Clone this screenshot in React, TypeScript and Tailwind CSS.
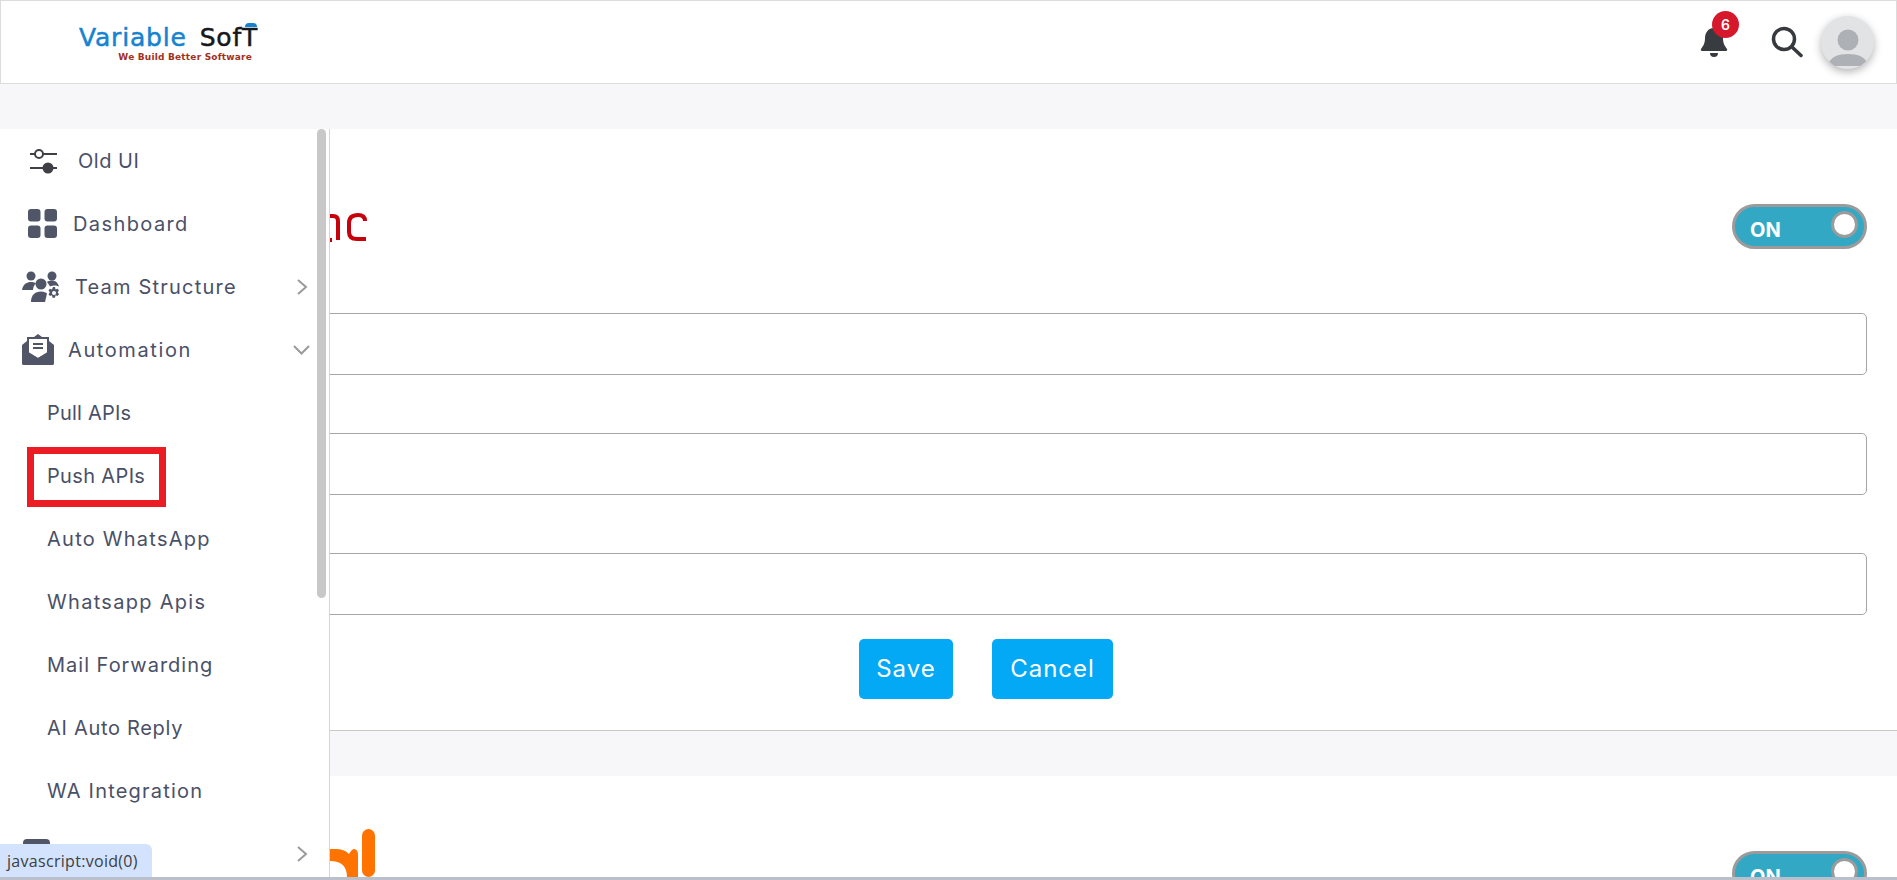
const textColor = "text-[#4a5068]";

function OldUiIcon() {
  return (
    <svg width="28" height="28" viewBox="0 0 28 28" className="text-[#3f3f46]">
      <g stroke="currentColor" strokeWidth="2" fill="none">
        <path d="M0 7h5M13 7h14" />
        <circle cx="9" cy="7" r="4" />
        <path d="M0 21h14M22 21h5" />
      </g>
      <circle cx="18" cy="21" r="5.5" fill="currentColor" />
    </svg>
  );
}

function DashIcon() {
  return (
    <svg width="29" height="29" viewBox="0 0 29 29" fill="#505568">
      <rect x="0" y="0" width="12.500" height="12.500" rx="3" />
      <rect x="16.500" y="0" width="12.500" height="12.500" rx="3" />
      <rect x="0" y="16.500" width="12.500" height="12.500" rx="3" />
      <rect x="16.500" y="16.500" width="12.500" height="12.500" rx="3" />
    </svg>
  );
}

function TeamIcon() {
  return (
    <svg width="40" height="32" viewBox="0 0 40 32" fill="#505568">
      <circle cx="9" cy="5" r="4.5" />
      <circle cx="30" cy="5" r="4.5" />
      <path d="M0 19c1-6 5-8 9-8 2 0 4 .5 5 1.5-2 1.500-3 4-3 6.500z" />
      <circle cx="19" cy="13" r="5.500" />
      <path d="M9 31c0-7 4-10.500 10-10.500 3 0 5 1 6 2l-2 8.500z" />
      <path d="M25 11c1-1 3-1.500 5-1.500 3 0 6 2 7 6l-3-1c-2 0-5 0-6 1-1-2-2-3.500-3-4.500z" />
      <path d="M31 16l2 0 .5 2.500 2-.8 1.500 1.500-1.300 2 1.300 2-1.500 1.800-2-.8-.5 2.500h-2.500l-.5-2.500-2 .8-1.500-1.800 1.300-2-1.300-2 1.500-1.500 2 .8z" />
      <circle cx="32" cy="22" r="2" fill="#fff" />
    </svg>
  );
}

function MailIcon() {
  return (
    <svg width="32" height="32" viewBox="0 0 32 32">
      <path d="M0 11L5 7V3h7l4-3 4 3h7v4l5 4v18a2 2 0 0 1-2 2H2a2 2 0 0 1-2-2z" fill="#505568" />
      <path d="M7 5h18v14l-9 5-9-5z" fill="#fff" />
      <path d="M11 10h10M11 14h10" stroke="#505568" strokeWidth="2" />
      <path d="M0 14l16 10 16-10v15a2 2 0 0 1-2 2H2a2 2 0 0 1-2-2z" fill="#505568" />
    </svg>
  );
}

function ChevRight() {
  return (
    <svg width="11" height="16" viewBox="0 0 11 16" fill="none" stroke="#9a9a9a" strokeWidth="2">
      <path d="M1 1l8 7-8 7" />
    </svg>
  );
}

function ChevDown() {
  return (
    <svg width="17" height="10" viewBox="0 0 17 10" fill="none" stroke="#9a9a9a" strokeWidth="2" className="mr-[-2px]">
      <path d="M1 1l7.500 7.500L16 1" />
    </svg>
  );
}

function Toggle() {
  return (
    <div className="flex h-[45px] w-[135px] items-center justify-between rounded-[23px] border-[3px] border-[#9b9b9b] bg-[#33a8c4] pl-[15px] pr-[6px]">
      <span className="mt-[6px] text-[20px] font-bold text-white">ON</span>
      <span className="mt-[-4px] h-[27px] w-[27px] rounded-full border-[3px] border-[#9b9b9b] bg-white" />
    </div>
  );
}

function Field() {
  return <div className="h-[62px] rounded-[5px] border border-[#a6a6a6] bg-white" />;
}

function MenuRow({ icon, label, chevron, pad, gap, track }: { icon: React.ReactNode; label: string; chevron?: "right" | "down"; pad: string; gap: string; track?: string }) {
  return (
    <div className={`flex h-[63px] items-center pr-[7px] ${pad}`}>
      <div className={`flex flex-1 items-center ${gap}`}>
        {icon}
        <span className={`text-[20px] ${track} ${textColor}`}>{label}</span>
      </div>
      {chevron === "right" && <ChevRight />}
      {chevron === "down" && <ChevDown />}
    </div>
  );
}

function SubRow({ label, track, boxed }: { label: string; track: string; boxed?: boolean }) {
  return (
    <div className="flex h-[63px] items-center pl-[47px]">
      <span className={`relative text-[20px] ${track} ${textColor}`}>
        {label}
        {boxed && <span className="absolute -bottom-[16px] -left-[20px] -right-[21px] -top-[14px] border-[7px] border-[#ec1c24]" />}
      </span>
    </div>
  );
}

export default function App() {
  return (
    <div className="relative h-[880px] overflow-hidden bg-[#f7f7f9] font-['Inter','Liberation_Sans',sans-serif]">
      {/* header */}
      <header className="flex h-[84px] items-center justify-between border border-[#dcdcdc] bg-white pr-[22px]">
        <div className="ml-[78px] mt-[2px] flex flex-col items-end">
          <div className="relative flex items-baseline gap-[13px] font-['DejaVu_Sans',sans-serif] text-[25px] leading-[27px] tracking-[0.8px] [-webkit-text-stroke:0.5px]">
            <span className="text-[#1583d0]">Variable</span>
            <span className="text-[#16181c]">SofT</span>
            <span className="absolute -top-[1px] right-[1px] h-[4px] w-[12px] rounded-t-full bg-[#1583d0]" />
          </div>
          <span className="mr-[6px] mt-[1px] font-['DejaVu_Sans',sans-serif] text-[9px] font-bold leading-[11px] tracking-[0.2px] text-[#a2301e]">We Build Better Software</span>
        </div>
        <div className="flex items-center">
          <div className="relative mr-[43px]">
            <svg width="28" height="30" viewBox="0 0 28 30" fill="#383c40" className="block">
              <path d="M14 1c-6 0-9 5-9 10 0 6-2 8-4 11-.5 1 0 2 1 2h24c1 0 1.500-1 1-2-2-3-4-5-4-11 0-5-3-10-9-10z" />
              <path d="M10 26h8a4 4 0 0 1-8 0z" />
            </svg>
            <span className="absolute -right-[11px] -top-[16px] flex h-[27px] w-[27px] items-center justify-center rounded-full bg-[#d5182c] text-[14px] font-semibold text-white">6</span>
          </div>
          <svg width="32" height="32" viewBox="0 0 32 32" fill="none" stroke="#36393d" strokeWidth="3.500" strokeLinecap="round" className="mr-[18px]">
            <circle cx="13" cy="13" r="10.500" />
            <path d="M21 21l9 8.500" />
          </svg>
          <div className="flex h-[53px] w-[53px] items-end justify-center overflow-hidden rounded-full bg-[#e1e3e5] shadow-[0_3px_8px_rgba(0,0,0,0.3)]">
            <svg width="40" height="42" viewBox="0 0 40 42" fill="#adb1b5">
              <circle cx="20" cy="13" r="10.500" />
              <path d="M0 38c2-8 10-11 20-11s18 3 20 11v1H0z" />
            </svg>
          </div>
        </div>
      </header>

      {/* main cards, the sidebar lies over their left side */}
      <main className="pt-[45px]">
        <section className="h-[602px] border-b border-[#c9c9c9] bg-white pl-[300px] pr-[30px]">
          <div className="flex h-[184px] items-start justify-between pl-[30px]">
            <svg width="38" height="32" viewBox="0 0 38 32" fill="none" stroke="#c7000b" strokeWidth="4" className="mt-[81px]">
              <path d="M0 6h3q5 0 5 5v19M0 30h2" />
              <path d="M35 11Q35 5 28 5Q19 5 19 13V22Q19 29 27 29H36" />
            </svg>
            <div className="mt-[75px]">
              <Toggle />
            </div>
          </div>
          <div className="flex flex-col gap-[58px]">
            <Field />
            <Field />
            <Field />
          </div>
          <div className="mt-[24px] flex gap-[39px] pl-[559px]">
            <button className="h-[60px] w-[94px] rounded-[5px] bg-[#04a9f5] text-[24px] tracking-[1px] text-white">Save</button>
            <button className="h-[60px] w-[121px] rounded-[5px] bg-[#04a9f5] text-[24px] tracking-[1px] text-white">Cancel</button>
          </div>
        </section>
        <section className="mt-[45px] flex h-[110px] items-start justify-between bg-white pl-[330px] pr-[30px]">
          <svg width="46" height="48" viewBox="0 0 46 48" className="mt-[53px]" fill="#ff7300">
            <path d="M0 20H6Q14 20 19 25Q22 20 24 20Q28 20 28 26V48H17Q17 32 0 32Z" />
            <rect x="32" y="0" width="13" height="48" rx="6.500" />
          </svg>
          <div className="mt-[75px]">
            <Toggle />
          </div>
        </section>
      </main>

      {/* sidebar */}
      <aside className="absolute bottom-0 left-0 top-[129px] w-[330px] overflow-hidden border-r border-[#d6d6d6] bg-white">
        <div className="absolute right-[3px] top-0 h-[469px] w-[9px] rounded-full bg-[#c8c8c8]" />
        <div className="pr-[14px]">
          <MenuRow icon={<OldUiIcon />} label="Old UI" pad="pl-[30px]" gap="gap-[20px]" track="tracking-[0.5px]" />
          <MenuRow icon={<DashIcon />} label="Dashboard" pad="pl-[28px]" gap="gap-[16px]" track="tracking-[1.4px]" />
          <MenuRow icon={<TeamIcon />} label="Team Structure" pad="pl-[22px]" gap="gap-[13px]" track="tracking-[1.2px]" chevron="right" />
          <MenuRow icon={<MailIcon />} label="Automation" pad="pl-[22px]" gap="gap-[14px]" track="tracking-[1.6px]" chevron="down" />
          <SubRow label="Pull APIs" track="tracking-[0.2px]" />
          <SubRow label="Push APIs" track="tracking-[0.35px]" boxed />
          <SubRow label="Auto WhatsApp" track="tracking-[1.25px]" />
          <SubRow label="Whatsapp Apis" track="tracking-[1.3px]" />
          <SubRow label="Mail Forwarding" track="tracking-[1px]" />
          <SubRow label="AI Auto Reply" track="tracking-[0.7px]" />
          <SubRow label="WA Integration" track="tracking-[1.2px]" />
          <MenuRow
            icon={
              <div className="flex h-[30px] w-[27px] justify-center rounded-[4px] bg-[#505568] pt-[5px]">
                <span className="h-[6px] w-[6px] rounded-full bg-white" />
              </div>
            }
            label=""
            pad="pl-[23px]"
            gap="gap-[14px]"
            chevron="right"
          />
        </div>
      </aside>

      {/* status bubble and bottom edge */}
      <div className="absolute bottom-[3px] left-0 flex h-[33px] w-[152px] items-center rounded-tr-[6px] bg-[#d3e3fd] pl-[7px] font-['Open_Sans',sans-serif] text-[16px] tracking-[0.3px] text-[#3c4043]">javascript:void(0)</div>
      <div className="absolute bottom-0 left-0 right-0 h-[3px] bg-[#b9c0cc]" />
    </div>
  );
}
